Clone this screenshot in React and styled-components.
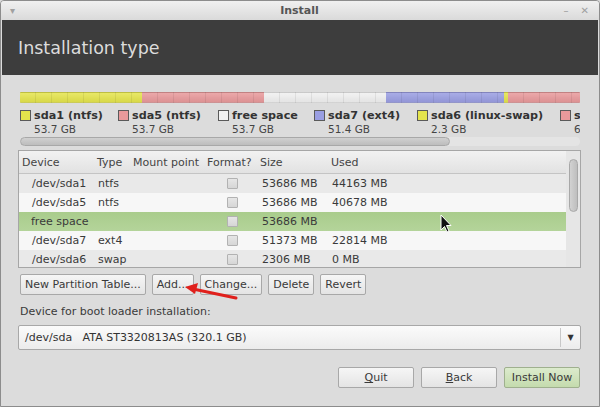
import React from 'react'
import styled, { createGlobalStyle } from 'styled-components'

const Global = createGlobalStyle`
  html, body {
    margin: 0;
    padding: 0;
    width: 600px;
    height: 407px;
    overflow: hidden;
    background: #dcdcdc;
  }
  * { box-sizing: border-box; }
`

const Window = styled.div`
  position: relative;
  width: 600px;
  height: 407px;
  display: flex;
  flex-direction: column;
  background: #dcdcdc;
  border: 1px solid #8c8c8c;
  border-radius: 4px 4px 0 0;
  font-family: 'DejaVu Sans', 'Liberation Sans', sans-serif;
  font-size: 11px;
  color: #3c3c3c;
  overflow: hidden;
`

const TitleBar = styled.div`
  height: 19px;
  flex: none;
  display: flex;
  align-items: center;
  justify-content: space-between;
  padding: 0 10px 0 9px;
  background: linear-gradient(#f0f0f0, #dadada);
  color: #555;
`

const TitleText = styled.div`
  font-weight: bold;
  font-size: 11px;
  color: #555;
`

const TitleSide = styled.div`
  width: 40px;
  display: flex;
  gap: 12px;
  justify-content: ${p => (p.$right ? 'flex-end' : 'flex-start')};
  color: #a0a0a0;
  font-size: 10px;
`

const Header = styled.div`
  flex: none;
  height: 55px;
  margin: 0 1px;
  background: #3d3d3d;
  color: #dcdcdc;
  display: flex;
  align-items: center;
  padding: 0 0 0 16px;
  font-size: 17.5px;
`

const Content = styled.div`
  flex: 1;
  display: flex;
  flex-direction: column;
  padding: 17px 19px 0 17px;
`

const PartBar = styled.div`
  display: flex;
  height: 11px;
  margin: 0 0 0 2px;
  border-radius: 1px;
  overflow: hidden;
`

const Segment = styled.div`
  width: ${p => p.$w}px;
  flex: none;
  background-color: ${p => p.$c};
  background-image: repeating-linear-gradient(
    90deg,
    transparent 0 15px,
    rgba(0, 0, 0, 0.07) 15px 16px
  ), linear-gradient(rgba(255,255,255,0.15), rgba(0,0,0,0.05));
  border-top: 1px solid rgba(0, 0, 0, 0.12);
  border-bottom: 1px solid rgba(0, 0, 0, 0.12);
`

const Legend = styled.div`
  display: flex;
  margin: 6px 0 0 2px;
  width: 560px;
  height: 26px;
  overflow: hidden;
`

const LegendItem = styled.div`
  flex: none;
  width: ${p => p.$w}px;
  display: grid;
  grid-template-columns: 14px auto;
  grid-template-rows: 13px 13px;
  align-items: center;
  white-space: nowrap;
`

const Swatch = styled.span`
  width: 11px;
  height: 11px;
  background: ${p => p.$c};
  border: 1px solid #5a5a5a;
  align-self: center;
`

const LegendLabel = styled.span`
  font-weight: bold;
  font-size: 11.2px;
  color: #333;
`

const LegendSize = styled.span`
  grid-column: 2;
  font-size: 10.5px;
  color: #444;
`

const HScroll = styled.div`
  margin: 2px 0 0 2px;
  width: 560px;
  height: 9px;
  background: #e4e4e4;
  border-radius: 5px;
  display: flex;
`

const HThumb = styled.div`
  width: 430px;
  height: 9px;
  border-radius: 5px;
  background: linear-gradient(#d0d0d0, #bdbdbd);
  border: 1px solid #a8a8a8;
`

const Table = styled.div`
  margin-top: 4px;
  height: 118px;
  width: 563px;
  display: flex;
  border: 1px solid #a6a6a6;
  background: #f6f6f6;
  overflow: hidden;
`

const TableMain = styled.div`
  flex: 1;
  display: flex;
  flex-direction: column;
`

const Row = styled.div`
  flex: none;
  display: grid;
  grid-template-columns: 75px 36px 74px 53px 71px 1fr;
  align-items: center;
  height: ${p => (p.$head ? 23 : 19)}px;
  background: ${p =>
    p.$head
      ? 'linear-gradient(#f2f2f2, #e2e2e2)'
      : p.$selected
      ? 'linear-gradient(#a9cc8c, #b4d49a)'
      : p.$alt
      ? '#e9e9e9'
      : '#f7f7f7'};
  border-bottom: ${p => (p.$head ? '1px solid #c4c4c4' : 'none')};
  color: ${p => (p.$head ? '#444' : '#3a3a3a')};
  white-space: nowrap;
`

const Cell = styled.span`
  padding-left: ${p => p.$pad ?? 3}px;
  overflow: hidden;
`

const Check = styled.span`
  display: block;
  width: 11px;
  height: 11px;
  margin-left: 23px;
  background: linear-gradient(#e6e6e6, #d6d6d6);
  border: 1px solid #b2b2b2;
  border-radius: 1px;
`

const VScroll = styled.div`
  width: 14px;
  flex: none;
  background: #e6e6e6;
  padding: 8px 2px 0 3px;
`

const VThumb = styled.div`
  width: 9px;
  height: 53px;
  border-radius: 5px;
  background: linear-gradient(90deg, #d2d2d2, #bebebe);
  border: 1px solid #a8a8a8;
`

const ButtonRow = styled.div`
  display: flex;
  gap: ${p => p.$gap}px;
  margin-top: ${p => p.$top}px;
  justify-content: ${p => (p.$end ? 'flex-end' : 'flex-start')};
  padding-left: ${p => (p.$end ? 0 : 2)}px;
`

const Button = styled.div`
  height: 21px;
  padding: 0 4px;
  min-width: ${p => p.$w || 0}px;
  display: flex;
  align-items: center;
  justify-content: center;
  border: 1px solid ${p => (p.$primary ? '#9fb08e' : '#a8a8a8')};
  border-radius: 2px;
  background: ${p =>
    p.$primary
      ? 'linear-gradient(#dcebcd, #c4dbad)'
      : 'linear-gradient(#f6f6f6, #e4e4e4)'};
  color: #3a3a3a;
  font-size: 11px;
  white-space: nowrap;
  u { text-decoration: underline; }
`

const Label = styled.div`
  margin: 10px 0 0 2px;
  height: 14px;
  color: #3a3a3a;
`

const Combo = styled.div`
  margin-top: 6px;
  height: 25px;
  width: 563px;
  display: flex;
  align-items: center;
  border: 1px solid #a8a8a8;
  border-radius: 2px;
  background: linear-gradient(#fbfbfb, #ececec);
`

const ComboText = styled.div`
  flex: 1;
  padding-left: 6px;
  color: #333;
  white-space: pre;
`

const ComboArrow = styled.div`
  width: 20px;
  height: 19px;
  border-left: 1px solid #c8c8c8;
  display: flex;
  align-items: center;
  justify-content: center;
  color: #333;
  font-size: 8px;
`

const Overlay = styled.svg`
  position: absolute;
  left: 0;
  top: 0;
  pointer-events: none;
`

const segments = [
  { w: 122, c: '#e4e44c' },
  { w: 122, c: '#e8999b' },
  { w: 122, c: '#f0f0f0' },
  { w: 118, c: '#9a9ee2' },
  { w: 4, c: '#e4e44c' },
  { w: 72, c: '#e8999b' },
]

const legend = [
  { w: 98, c: '#e4e44c', name: 'sda1 (ntfs)', size: '53.7 GB' },
  { w: 100, c: '#e8999b', name: 'sda5 (ntfs)', size: '53.7 GB' },
  { w: 96, c: '#f2f2f2', name: 'free space', size: '53.7 GB' },
  { w: 103, c: '#9a9ee2', name: 'sda7 (ext4)', size: '51.4 GB' },
  { w: 143, c: '#e4e44c', name: 'sda6 (linux-swap)', size: '2.3 GB' },
  { w: 20, c: '#e8999b', name: 's', size: '6' },
]

const rows = [
  { dev: '/dev/sda1', type: 'ntfs', size: '53686 MB', used: '44163 MB', alt: true },
  { dev: '/dev/sda5', type: 'ntfs', size: '53686 MB', used: '40678 MB' },
  { dev: 'free space', type: '', size: '53686 MB', used: '', selected: true, pad: 12 },
  { dev: '/dev/sda7', type: 'ext4', size: '51373 MB', used: '22814 MB' },
  { dev: '/dev/sda6', type: 'swap', size: '2306 MB', used: '0 MB', alt: true },
]

export default function App() {
  return (
    <Window>
      <Global />
      <TitleBar>
        <TitleSide>▾</TitleSide>
        <TitleText>Install</TitleText>
        <TitleSide $right>
          <span>–</span>
          <span>✕</span>
        </TitleSide>
      </TitleBar>
      <Header>Installation type</Header>
      <Content>
        <PartBar>
          {segments.map((s, i) => (
            <Segment key={i} $w={s.w} $c={s.c} />
          ))}
        </PartBar>
        <Legend>
          {legend.map(l => (
            <LegendItem key={l.name} $w={l.w}>
              <Swatch $c={l.c} />
              <LegendLabel>{l.name}</LegendLabel>
              <LegendSize>{l.size}</LegendSize>
            </LegendItem>
          ))}
        </Legend>
        <HScroll>
          <HThumb />
        </HScroll>
        <Table>
          <TableMain>
            <Row $head>
              <Cell>Device</Cell>
              <Cell>Type</Cell>
              <Cell>Mount point</Cell>
              <Cell>Format?</Cell>
              <Cell>Size</Cell>
              <Cell>Used</Cell>
            </Row>
            {rows.map(r => (
              <Row key={r.dev} $alt={r.alt} $selected={r.selected}>
                <Cell $pad={r.pad || 13}>{r.dev}</Cell>
                <Cell $pad={4}>{r.type}</Cell>
                <Cell />
                <Cell $pad={0}>
                  <Check />
                </Cell>
                <Cell $pad={5}>{r.size}</Cell>
                <Cell $pad={4}>{r.used}</Cell>
              </Row>
            ))}
          </TableMain>
          <VScroll>
            <VThumb />
          </VScroll>
        </Table>
        <ButtonRow $gap={6} $top={6}>
          <Button>New Partition Table...</Button>
          <Button>Add...</Button>
          <Button>Change...</Button>
          <Button>Delete</Button>
          <Button>Revert</Button>
        </ButtonRow>
        <Label>Device for boot loader installation:</Label>
        <Combo>
          <ComboText>{'/dev/sda   ATA ST3320813AS (320.1 GB)'}</ComboText>
          <ComboArrow>▼</ComboArrow>
        </Combo>
        <ButtonRow $gap={7} $top={17} $end>
          <Button $w={76}>
            <u>Q</u>uit
          </Button>
          <Button $w={76}>
            <u>B</u>ack
          </Button>
          <Button $w={76} $primary>
            Install Now
          </Button>
        </ButtonRow>
      </Content>
      <Overlay width="600" height="407" viewBox="0 0 600 407">
        <line x1="235" y1="297" x2="192" y2="288" stroke="#e0201c" strokeWidth="3" strokeLinecap="round" />
        <polygon points="184,286 197,282 194,293" fill="#e0201c" />
        <path
          d="M440 214 L440 229 L443.5 225.5 L446 231 L448 230 L445.5 224.5 L450 224.5 Z"
          fill="#111"
          stroke="#fff"
          strokeWidth="1"
          strokeLinejoin="round"
        />
      </Overlay>
    </Window>
  )
}
